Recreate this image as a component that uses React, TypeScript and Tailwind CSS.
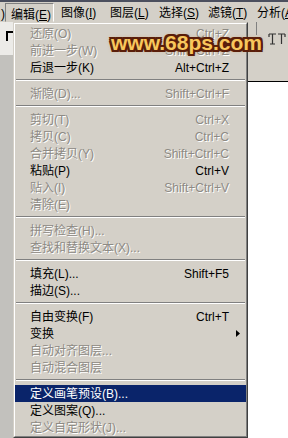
type Row = {
  label: string
  key?: string
  off?: boolean
  sub?: boolean
  hot?: boolean
}

type Entry = Row | 'sep'

const entries: Entry[] = [
  { label: '还原(O)', key: 'Ctrl+Z', off: true },
  { label: '前进一步(W)', key: 'Shift+Ctrl+Z', off: true },
  { label: '后退一步(K)', key: 'Alt+Ctrl+Z' },
  'sep',
  { label: '渐隐(D)...', key: 'Shift+Ctrl+F', off: true },
  'sep',
  { label: '剪切(T)', key: 'Ctrl+X', off: true },
  { label: '拷贝(C)', key: 'Ctrl+C', off: true },
  { label: '合并拷贝(Y)', key: 'Shift+Ctrl+C', off: true },
  { label: '粘贴(P)', key: 'Ctrl+V' },
  { label: '贴入(I)', key: 'Shift+Ctrl+V', off: true },
  { label: '清除(E)', off: true },
  'sep',
  { label: '拼写检查(H)...', off: true },
  { label: '查找和替换文本(X)...', off: true },
  'sep',
  { label: '填充(L)...', key: 'Shift+F5' },
  { label: '描边(S)...' },
  'sep',
  { label: '自由变换(F)', key: 'Ctrl+T' },
  { label: '变换', sub: true },
  { label: '自动对齐图层...', off: true },
  { label: '自动混合图层', off: true },
  'sep',
  { label: '定义画笔预设(B)...', hot: true },
  { label: '定义图案(Q)...' },
  { label: '定义自定形状(J)...', off: true },
]

const menus = [
  { name: '编辑', key: 'E', open: true },
  { name: '图像', key: 'I' },
  { name: '图层', key: 'L' },
  { name: '选择', key: 'S' },
  { name: '滤镜', key: 'T' },
  { name: '分析', key: 'A' },
]

function MenuRow({ row }: { row: Row }) {
  const tone = row.hot
    ? 'bg-[#0a246a] text-white'
    : row.off
      ? 'text-[#8d8a84] [text-shadow:1px_1px_0_#ffffff]'
      : 'text-black'

  return (
    <div className={`flex h-[17px] items-center pl-[15px] ${tone}`}>
      <span className="whitespace-nowrap">{row.label}</span>
      <span className="ml-auto whitespace-nowrap">{row.key}</span>
      <span className="flex w-[17px] justify-center">
        {row.sub && (
          <svg width="4" height="7" viewBox="0 0 4 7">
            <path d="M0 0 L4 3.5 L0 7 Z" fill="#000" />
          </svg>
        )}
      </span>
    </div>
  )
}

export default function App() {
  return (
    <div className="relative flex h-[438px] w-[288px] flex-col overflow-hidden bg-[#d4d0c8] font-['Liberation_Sans','Noto_Sans_CJK_SC',sans-serif] text-[12px] leading-none">
      {/* menu bar */}
      <div className="flex h-[22px] shrink-0 border-t-2 border-[#4b4f5e] bg-[#d4d0c8] text-black">
        <div className="w-[14px] pt-[6px] pl-[1px]">)</div>
        {menus.map(m => (
          <div
            key={m.name}
            className={`w-[49px] shrink-0 whitespace-nowrap pl-[5px] pt-[5px] ${m.open ? 'mt-[1px] w-[47px] mr-[2px] border border-t-[#808080] border-l-[#808080] border-r-white border-b-transparent pl-[4px] pt-[4px]' : ''}`}
          >
            {m.name}(<span className="underline underline-offset-1">{m.key}</span>)
          </div>
        ))}
      </div>

      <div className="flex min-h-0 flex-1">
        {/* left tool strip */}
        <div className="flex w-[13px] shrink-0 flex-col">
          <div className="h-[33px] bg-[#ecebe8] pl-[6px] pt-[9px]">
            <div className="h-[10px] w-[7px] border-t-2 border-l-2 border-black" />
          </div>
          <div className="flex-1 bg-[#c2c1bd]" />
        </div>

        {/* dropdown */}
        <div className="w-[235px] shrink-0 border border-t-[#d4d0c8] border-l-[#d4d0c8] border-r-[#404040] border-b-[#404040]">
          <div className="h-full border border-t-white border-l-white border-r-[#808080] border-b-[#808080] bg-[#d4d0c8] py-px">
            {entries.map((e, i) =>
              e === 'sep' ? (
                <div key={i} className="h-[9px] pt-[3px]">
                  <div className="mx-px h-px bg-[#808080]" />
                  <div className="mx-px h-px bg-white" />
                </div>
              ) : (
                <MenuRow key={i} row={e} />
              )
            )}
          </div>
        </div>

        {/* right area */}
        <div className="flex flex-1 flex-col">
          <div className="relative h-[59px] bg-[#d4d0c8]">
            <div className="ml-[8px] h-[13px] w-px bg-[#808080]" />
            <svg className="ml-[20px] mt-[-2px]" width="18" height="12" viewBox="0 0 18 12">
              <path d="M1 1 H8 M1 1 V4 M4.5 1 V11 M10 1 H17 M13.5 1 V11 M17 1 V4 M2 11 H7" stroke="#333" strokeWidth="1.2" fill="none" />
            </svg>
          </div>
          <div className="flex-1 border-t border-black bg-white" />
        </div>
      </div>

      {/* watermark */}
      <div className="absolute left-[111px] top-[32px] font-['Liberation_Sans',sans-serif] text-[21px] font-bold leading-none text-[#f8c75c] [text-shadow:2px_0_0_#5a1e0a,-2px_0_0_#5a1e0a,0_2px_0_#5a1e0a,0_-2px_0_#5a1e0a,2px_2px_0_#5a1e0a,-2px_2px_0_#5a1e0a,2px_-2px_0_#5a1e0a,-2px_-2px_0_#5a1e0a,0_0_5px_#c88a48]">
        www.68ps.com
      </div>
    </div>
  )
}
